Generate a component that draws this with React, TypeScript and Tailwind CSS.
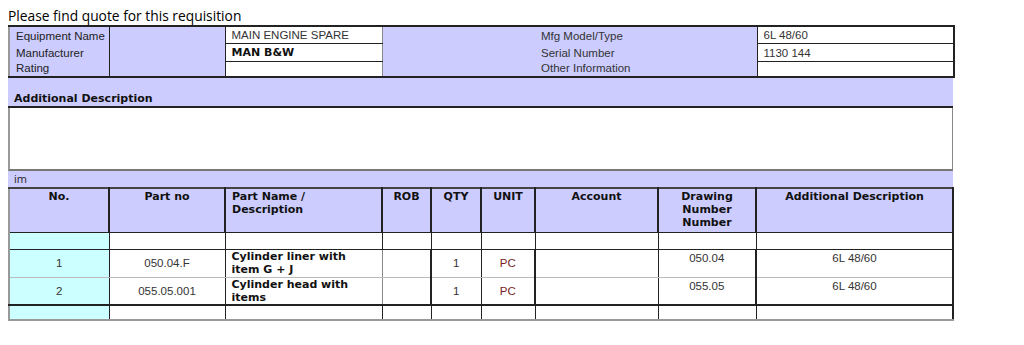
const bold = "font-['DejaVu_Sans',Verdana,sans-serif] font-bold text-[11px] leading-[13px]";
const reg = "font-['Liberation_Sans',Arial,sans-serif] text-[11.5px]";

const items = [
  { no: "1", part: "050.04.F", name: "Cylinder liner with item G + J", qty: "1", unit: "PC", drawing: "050.04", desc: "6L 48/60" },
  { no: "2", part: "055.05.001", name: "Cylinder head with items", qty: "1", unit: "PC", drawing: "055.05", desc: "6L 48/60" },
];

const cols = [100, 116, 157, 49, 50, 54, 123, 98, 197];

const headers = ["No.", "Part no", "Part Name / Description", "ROB", "QTY", "UNIT", "Account", "Drawing Number Number", "Additional Description"];

export default function App() {
  return (
    <div className="bg-white w-[1024px] h-[345px] pl-2 pt-[7px] text-[#1a1a1a]">
      <div className="font-['Open_Sans',sans-serif] text-[13.8px] leading-[18px] text-black">
        Please find quote for this requisition
      </div>

      {/* equipment details */}
      <table className={`${reg} table-fixed border-collapse w-[945px] leading-[14px]`}>
        <colgroup>
          <col className="w-[100px]" />
          <col className="w-[116px]" />
          <col className="w-[157px]" />
          <col className="w-[153px]" />
          <col className="w-[222px]" />
          <col className="w-[197px]" />
        </colgroup>
        <tbody>
          <tr className="h-[17px]">
            <td rowSpan={3} className="bg-[#ccccff] border-t-2 border-t-[#222] border-l-2 border-l-[#999] border-r border-r-[#222] border-b-2 border-b-[#222] px-[6px] align-top pt-[1px] text-[#222] whitespace-nowrap">
              <div className="leading-[17px]">Equipment Name</div>
              <div className="leading-[16px]">Manufacturer</div>
              <div className="leading-[15px]">Rating</div>
            </td>
            <td rowSpan={3} className="bg-[#ccccff] border-t-2 border-t-[#222] border-r border-r-[#222] border-b-2 border-b-[#222]" />
            <td className="bg-white border-t-2 border-t-[#222] border-b border-b-[#222] border-r border-r-[#888] px-[6px] text-[#333]">MAIN ENGINE SPARE</td>
            <td rowSpan={3} className="bg-[#ccccff] border-t-2 border-t-[#222] border-b-2 border-b-[#222]" />
            <td rowSpan={3} className="bg-[#ccccff] border-t-2 border-t-[#222] border-b-2 border-b-[#222] border-r border-r-[#222] px-[6px] align-top pt-[1px] text-[#333] whitespace-nowrap">
              <div className="leading-[17px]">Mfg Model/Type</div>
              <div className="leading-[16px]">Serial Number</div>
              <div className="leading-[15px]">Other Information</div>
            </td>
            <td className="bg-white border-t-2 border-t-[#222] border-b border-b-[#222] border-r-2 border-r-[#222] px-[6px] text-[#333]">6L 48/60</td>
          </tr>
          <tr className="h-[17px]">
            <td className={`bg-white border-b border-b-[#222] border-r border-r-[#888] px-[6px] ${bold} text-[9.5px] text-[#111]`}>MAN B&amp;W</td>
            <td className="bg-white border-b border-b-[#222] border-r-2 border-r-[#222] px-[6px] text-[#333]">1130 144</td>
          </tr>
          <tr className="h-[15px]">
            <td className="bg-white border-b-2 border-b-[#222] border-r border-r-[#888]" />
            <td className="bg-white border-b-2 border-b-[#222] border-r-2 border-r-[#222]" />
          </tr>
        </tbody>
      </table>

      {/* additional description */}
      <div className={`${bold} w-[945px] h-[30px] bg-[#ccccff] flex items-end pl-[6px] pb-[1px] text-[#111] border-b-2 border-b-[#222]`}>
        Additional Description
      </div>
      <div className="w-[945px] h-[63px] bg-white border-l-2 border-l-[#999] border-r border-r-[#888] border-b-2 border-b-[#777]" />

      {/* items */}
      <div className="w-[945px] h-[16px] bg-[#ccccff] font-['Open_Sans',sans-serif] text-[11px] leading-[16px] pl-[6px] text-[#222]">
        im
      </div>
      <table className={`${reg} table-fixed border-collapse w-[945px] leading-[14px]`}>
        <colgroup>
          {cols.map((w, i) => (
            <col key={i} style={{ width: w }} />
          ))}
        </colgroup>
        <thead>
          <tr className="h-[44px] bg-[#ccccff]">
            {headers.map((h, i) => (
              <th
                key={h}
                className={`border-t-2 border-t-[#444] border-r-2 border-r-[#222] border-b border-b-[#222] align-top pt-[1px] px-[6px] ${bold} text-[#111] ${
                  i === 2 ? "text-left" : "text-center"
                } ${i === 0 ? "border-l-2 border-l-[#999]" : ""}`}
              >
                {h}
              </th>
            ))}
          </tr>
        </thead>
        <tbody>
          <tr className="h-[17px]">
            {cols.map((_, i) => (
              <td
                key={i}
                className={`border-b border-b-[#222] border-r border-r-[#222] ${i === 0 ? "bg-[#ccffff] border-l-2 border-l-[#999]" : "bg-white"} ${i === 8 ? "border-r-2" : ""}`}
              />
            ))}
          </tr>
          {items.map((it, idx) => {
            const b = idx === 0 ? "border-b border-b-[#bbb]" : "border-b-2 border-b-[#222]";
            return (
              <tr key={it.no} className="h-[28px]">
                <td className={`bg-[#ccffff] border-l-2 border-l-[#999] border-r border-r-[#222] text-center align-middle text-[#333] ${b}`}>{it.no}</td>
                <td className={`bg-white border-r border-r-[#222] text-center align-middle text-[#333] ${b}`}>{it.part}</td>
                <td className={`bg-white border-r border-r-[#888] px-[6px] align-top text-left ${bold} text-[#111] ${b}`}>{it.name}</td>
                <td className={`bg-white border-r-2 border-r-[#222] ${b}`} />
                <td className={`bg-white border-r border-r-[#222] text-center align-middle text-[#333] ${b}`}>{it.qty}</td>
                <td className={`bg-white border-r-2 border-r-[#222] text-center align-middle text-[#7a1f1f] ${b}`}>{it.unit}</td>
                <td className={`bg-white border-r border-r-[#222] ${b}`} />
                <td className={`bg-white border-r-2 border-r-[#222] text-center align-top pt-[1px] text-[#333] ${b}`}>{it.drawing}</td>
                <td className={`bg-white border-r-2 border-r-[#222] text-center align-top pt-[1px] text-[#333] ${b}`}>{it.desc}</td>
              </tr>
            );
          })}
          <tr className="h-[15px]">
            {cols.map((_, i) => (
              <td
                key={i}
                className={`border-b-2 border-b-[#999] border-r border-r-[#222] ${i === 0 ? "bg-[#ccffff] border-l-2 border-l-[#999]" : "bg-white"} ${i === 8 ? "border-r-2" : ""}`}
              />
            ))}
          </tr>
        </tbody>
      </table>
    </div>
  );
}
